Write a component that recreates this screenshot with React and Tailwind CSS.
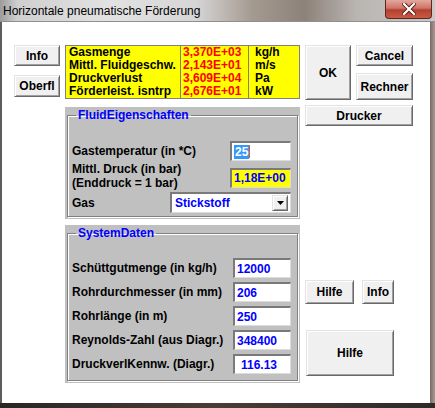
import React from 'react';

// Win32 style push button
const btn =
  'bg-[#f0f0f0] border border-t-[#e3e3e3] border-l-[#e3e3e3] border-r-[#696969] border-b-[#696969] shadow-[inset_1px_1px_0_#ffffff,inset_-1px_-1px_0_#a0a0a0] flex items-center justify-center font-bold text-[12px] text-black';

// sunken edit field (background set per use)
const field =
  'h-[20px] border-t-2 border-l-2 border-r border-b border-t-[#7a7a7a] border-l-[#7a7a7a] border-r-[#dcdcdc] border-b-[#dcdcdc] text-[#0000ff] font-bold text-[12px] leading-none flex items-center pl-[2px]';

const Row = ({ label, value, extra = '' }) => (
  <div className="flex items-center justify-between h-[20px]">
    <span className="font-bold text-[12px] text-black">{label}</span>
    <div className={`${field} bg-white w-[58px] ${extra}`}>{value}</div>
  </div>
);

const CloseX = () => (
  <svg width="14" height="12" viewBox="0 0 14 12">
    <path d="M2 1 L12 11 M12 1 L2 11" stroke="#5a1a14" strokeWidth="4" strokeLinecap="square" />
    <path d="M2 1 L12 11 M12 1 L2 11" stroke="#ffffff" strokeWidth="2.2" strokeLinecap="square" />
  </svg>
);

const App = () => {
  return (
    <div className="w-[435px] h-[408px] flex flex-col overflow-hidden font-['Liberation_Sans',Arial,sans-serif] bg-[#6f6a66]">
      {/* Title bar */}
      <div className="h-[22px] relative flex items-center pl-[3px] border-b border-[#8f8f8f] bg-[linear-gradient(90deg,#9c9c9c_0%,#cfcfcf_4%,#e2e2e2_25%,#d6d6d6_45%,#a59a90_58%,#8d8279_70%,#b9b5b1_82%,#c8c8c8_100%)]">
        <span className="text-[12px] text-black leading-none">Horizontale pneumatische Förderung</span>
        <div className="absolute right-[3px] top-0 w-[47px] h-[19px] rounded-b-[4px] border border-t-0 border-[#5e2620] bg-[linear-gradient(180deg,#e3a79e_0%,#cf7466_45%,#b3402f_55%,#c95a45_100%)] flex items-center justify-center">
          <CloseX />
        </div>
      </div>

      <div className="flex flex-1">
        <div className="w-[2px] bg-[#5c5c5c]" />

        {/* Client area */}
        <div className="flex-1 bg-white flex pl-[12px] pt-[23px]">
          {/* Left buttons */}
          <div className="w-[46px] flex flex-col">
            <div className={`${btn} h-[21px]`}>Info</div>
            <div className={`${btn} h-[22px] mt-[9px]`}>Oberfl</div>
          </div>

          {/* Middle column */}
          <div className="w-[235px] ml-[5px] flex flex-col">
            <div className="h-[54px] bg-[#ffff00] border border-[#808080] flex text-[12px] font-bold leading-[13px]">
              <div className="w-[115px] pl-[3px] border-r border-[#808080] text-black">
                Gasmenge<br />Mittl. Fluidgeschw.<br />Druckverlust<br />Förderleist. isntrp
              </div>
              <div className="w-[68px] pl-[2px] border-r border-[#808080] text-[#ff0000]">
                3,370E+03<br />2,143E+01<br />3,609E+04<br />2,676E+01
              </div>
              <div className="flex-1 pl-[6px] text-black">
                kg/h<br />m/s<br />Pa<br />kW
              </div>
            </div>

            {/* FluidEigenschaften */}
            <div className="h-[112px] mt-[8px] bg-[#c0c0c0] px-[2px] pt-[1px] pb-[2px]">
              <fieldset className="h-full border border-[#808080] shadow-[1px_1px_0_#ffffff,inset_1px_1px_0_#ffffff] pl-[4px] pr-[6px]">
                <legend className="ml-[4px] px-[2px] text-[#0000ff] font-bold text-[12px] leading-[14px]">FluidEigenschaften</legend>
                <div className="flex items-center justify-between h-[20px] mt-[19px]">
                  <span className="font-bold text-[12px]">Gastemperatur (in *C)</span>
                  <div className={`${field} bg-white w-[61px]`}>
                    <span className="bg-[#3399ff] text-white px-[1px] leading-[14px]">25</span>
                    <span className="w-[1px] h-[13px] bg-[#e05a20]" />
                  </div>
                </div>
                <div className="flex items-center justify-between h-[19px] mt-[7px]">
                  <div className="flex flex-col font-bold text-[12px] leading-[14px] pb-[3px]">
                    <span>Mittl. Druck (in bar)</span>
                    <span>(Enddruck = 1 bar)</span>
                  </div>
                  <div className={`${field} bg-[#ffff00] w-[61px] h-[19px]`}>1,18E+00</div>
                </div>
                <div className="flex items-center justify-between h-[21px] mt-[5px]">
                  <span className="font-bold text-[12px]">Gas</span>
                  <div className={`${field} bg-white w-[121px] h-[21px] justify-between pr-[2px]`}>
                    <span className="pl-[1px]">Stickstoff</span>
                    <div className={`${btn} w-[16px] h-[16px]`}>
                      <svg width="7" height="4" viewBox="0 0 7 4"><path d="M0 0 H7 L3.5 4 Z" fill="#000" /></svg>
                    </div>
                  </div>
                </div>
              </fieldset>
            </div>

            {/* SystemDaten */}
            <div className="h-[158px] mt-[6px] bg-[#c0c0c0] px-[2px] pt-[1px] pb-[2px]">
              <fieldset className="h-full border border-[#808080] shadow-[1px_1px_0_#ffffff,inset_1px_1px_0_#ffffff] pl-[4px] pr-[6px]">
                <legend className="ml-[4px] px-[2px] text-[#0000ff] font-bold text-[12px] leading-[14px]">SystemDaten</legend>
                <div className="flex flex-col gap-[4px] mt-[18px]">
                  <Row label="Schüttgutmenge (in kg/h)" value="12000" />
                  <Row label="Rohrdurchmesser (in mm)" value="206" />
                  <Row label="Rohrlänge (in m)" value="250" />
                  <Row label="Reynolds-Zahl (aus Diagr.)" value="348400" />
                  <Row label="DruckverlKennw. (Diagr.)" value="116.13" extra="pl-[6px]" />
                </div>
              </fieldset>
            </div>
          </div>

          {/* Right column */}
          <div className="w-[108px] ml-[5px] flex flex-col">
            <div className="flex">
              <div className={`${btn} w-[46px] h-[55px]`}>OK</div>
              <div className="w-[57px] ml-[5px] flex flex-col">
                <div className={`${btn} h-[21px]`}>Cancel</div>
                <div className={`${btn} h-[27px] mt-[7px]`}>Rechner</div>
              </div>
            </div>
            <div className={`${btn} h-[21px] mt-[5px]`}>Drucker</div>
            <div className="flex mt-[154px]">
              <div className={`${btn} w-[49px] h-[24px]`}>Hilfe</div>
              <div className={`${btn} w-[32px] h-[24px] ml-[8px]`}>Info</div>
            </div>
            <div className={`${btn} w-[88px] h-[46px] mt-[26px] ml-[1px]`}>Hilfe</div>
          </div>
        </div>

        <div className="w-[5px] bg-[linear-gradient(90deg,#7a6a66,#a89a94)]" />
      </div>
      <div className="h-[5px] bg-[linear-gradient(90deg,#2a2624,#4a3c36,#2e2a28)]" />
    </div>
  );
};

export default App;
